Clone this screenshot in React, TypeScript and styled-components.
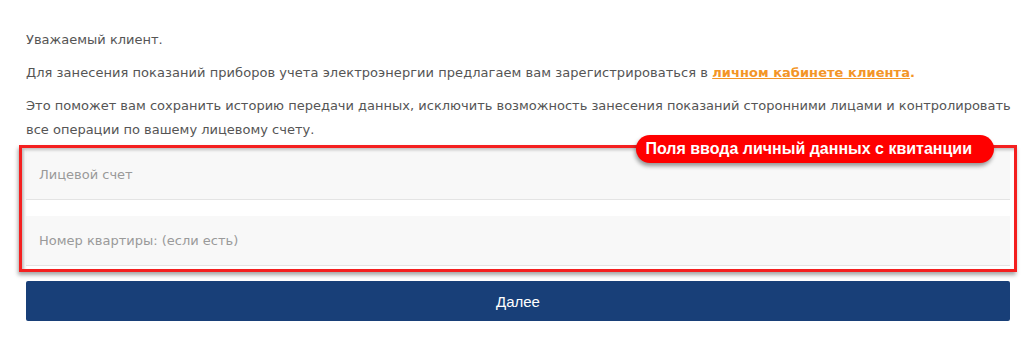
import React from 'react';
import styled, { createGlobalStyle } from 'styled-components';

const GlobalStyle = createGlobalStyle`
    body {
        margin: 0;
        background: #ffffff;
    }
`;

const Page = styled.div`
    width: 984px;
    padding: 28px 0 0 26px;
    font-family: "DejaVu Sans", Verdana, sans-serif;
`;

const Texto = styled.p<{ last?: boolean; spacing?: number }>`
    margin: 0 0 ${(p) => (p.last ? '8px' : '9px')};
    font-size: 13px;
    letter-spacing: ${(p) => p.spacing ?? 0}px;
    line-height: 24px;
    color: #555555;
    white-space: nowrap;
`;

const Link = styled.a`
    color: #f39527;
    font-weight: bold;
    text-decoration: underline;
    cursor: pointer;
`;

const Ponto = styled.span`
    color: #f39527;
    font-weight: bold;
`;

const Campos = styled.div`
    position: relative;
    display: flex;
    flex-direction: column;
    gap: 16px;
`;

const Campo = styled.input`
    box-sizing: border-box;
    width: 100%;
    height: 50px;
    padding: 0 13px;
    border: none;
    border-bottom: 1px solid #e4e4e4;
    background: #f8f8f8;
    font-family: "DejaVu Sans", Verdana, sans-serif;
    font-size: 13px;
    color: #555;
    outline: none;

    &::placeholder {
        color: #9a9a9a;
    }
`;

const Moldura = styled.div`
    position: absolute;
    top: -5px;
    bottom: -6px;
    left: -7px;
    right: -7px;
    border: 3px solid #f42020;
    box-shadow: -1px 3px 4px rgba(0, 0, 0, 0.35), inset 2px 2px 3px rgba(0, 0, 0, 0.25);
    pointer-events: none;
`;

const Etiqueta = styled.div`
    position: absolute;
    top: -15px;
    right: 16px;
    height: 28px;
    padding: 0 22px 0 9px;
    display: flex;
    align-items: center;
    background: #ff0000;
    border-radius: 14px;
    box-shadow: -1px 3px 4px rgba(0, 0, 0, 0.4);
    color: #ffffff;
    font-family: "Liberation Sans", Arial, sans-serif;
    font-weight: bold;
    font-size: 16px;
    white-space: nowrap;
`;

const Botao = styled.button`
    display: block;
    width: 100%;
    height: 40px;
    margin-top: 15px;
    border: none;
    border-radius: 2px;
    background: #183f78;
    color: #ffffff;
    font-family: "Liberation Sans", Arial, sans-serif;
    font-size: 15px;
    cursor: pointer;
`;

const App: React.FC = () => {
    return (
        <>
            <GlobalStyle />
            <Page>
                <Texto>Уважаемый клиент.</Texto>
                <Texto spacing={0.05}>
                    Для занесения показаний приборов учета электроэнергии предлагаем вам зарегистрироваться в{' '}
                    <Link>личном кабинете клиента</Link>
                    <Ponto>.</Ponto>
                </Texto>
                <Texto last>
                    Это поможет вам сохранить историю передачи данных, исключить возможность занесения показаний
                    сторонними лицами и контролировать
                    <br />
                    все операции по вашему лицевому счету.
                </Texto>
                <Campos>
                    <Campo placeholder="Лицевой счет" />
                    <Campo placeholder="Номер квартиры: (если есть)" />
                    <Moldura />
                    <Etiqueta>Поля ввода личный данных с квитанции</Etiqueta>
                </Campos>
                <Botao>Далее</Botao>
            </Page>
        </>
    );
};

export default App;
